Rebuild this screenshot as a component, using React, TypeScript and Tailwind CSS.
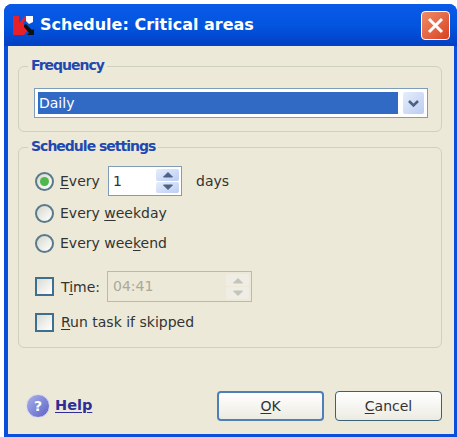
import React from 'react';

const font = { fontFamily: '"DejaVu Sans", sans-serif' };

const Radio = ({ checked }: { checked?: boolean }) => (
  <span className="flex h-[19px] w-[19px] shrink-0 items-center justify-center rounded-full border-2 border-[#5a7a88] bg-gradient-to-br from-[#d8d8d0] to-white">
    {checked && <span className="h-[9px] w-[9px] rounded-full bg-[#4fb84a]" />}
  </span>
);

const Checkbox = () => (
  <span className="h-[19px] w-[19px] shrink-0 border-2 border-[#3e6f8e] bg-gradient-to-br from-[#dcdcd4] to-white" />
);

const SpinButtons = ({ disabled }: { disabled?: boolean }) => {
  const color = disabled ? '#c4c4bc' : '#4d6185';
  const bg = disabled
    ? 'bg-[#f0eee4]'
    : 'bg-gradient-to-br from-[#e6eefc] to-[#bccdf1]';
  return (
    <div className="flex w-[23px] flex-col gap-px">
      {[true, false].map((up) => (
        <div key={String(up)} className={`flex flex-1 items-center justify-center rounded-[2px] ${bg}`}>
          <svg width="12" height="7" viewBox="0 0 12 7">
            <path d={up ? 'M1.5 6 6 1.5 10.5 6z' : 'M1.5 1 6 5.5 10.5 1z'} fill={color} stroke={color} />
          </svg>
        </div>
      ))}
    </div>
  );
};

const Group = ({ title, className, children }: { title: string; className: string; children: React.ReactNode }) => (
  <div className={`relative rounded-[6px] border border-[#d0d0bf] ${className}`}>
    <span className="absolute left-[9px] top-[-11px] bg-[#ece9d8] px-[3px] text-[14px] font-bold leading-[18px] tracking-[-1px] text-[#1f48b0]">
      {title}
    </span>
    {children}
  </div>
);

const Label = ({ pre, u, post }: { pre?: string; u: string; post?: string }) => (
  <span className="text-[14px] leading-[19px] text-[#333]">
    {pre}
    <span className="underline underline-offset-2">{u}</span>
    {post}
  </span>
);

export default function App() {
  return (
    <div className="h-[437px] w-[457px] bg-white pl-[4px] pt-[4px]" style={font}>
      <div className="flex h-full flex-col rounded-t-[8px] bg-[#0a4fdc] pl-[4px] pr-[3px] pb-[3px]">
        {/* title bar */}
        <div className="-ml-[4px] -mr-[3px] flex h-[42px] shrink-0 items-center rounded-t-[8px] bg-gradient-to-b from-[#0a5ae8] via-[#0355e0] to-[#0240c4] pl-[9px] pr-[7px]">
          <svg width="21" height="21" viewBox="0 0 21 21" className="shrink-0">
            <path d="M0 1h6v7l6-7h4l-6 7 5 7-4 5H6l0-7v7H0z" fill="#e8202a" />
            <path d="M13 1h7v6l-4 2-3-3z" fill="#fff" />
            <path d="M11 10l2-1 6 6 2-1v6h-7l2-2-5-6z" fill="#111" />
          </svg>
          <span className="ml-[6px] flex-1 text-[16px] font-bold text-white">Schedule: Critical areas</span>
          <div className="flex h-[29px] w-[29px] items-center justify-center rounded-[4px] border border-white bg-gradient-to-br from-[#ef8a66] to-[#d8401c]">
            <svg width="17" height="17" viewBox="0 0 17 17">
              <path d="M2 2l13 13M15 2 2 15" stroke="#fff" strokeWidth="3" />
            </svg>
          </div>
        </div>

        {/* client area */}
        <div className="flex flex-1 flex-col bg-[#ece9d8] pl-[10px] pr-[12px] text-[#333]">
          <Group title="Frequency" className="mt-[20px] h-[66px] shrink-0 pl-[15px] pr-[13px] pt-[21px]">
            <div className="flex h-[30px] items-center border border-[#7f9db9] bg-white p-[3px]">
              <div className="flex h-full flex-1 items-center bg-[#316ac5] pl-[1px] text-[14px] text-white">Daily</div>
              <div className="ml-[5px] flex h-full w-[21px] items-center justify-center rounded-[2px] bg-gradient-to-br from-[#e6eefc] to-[#bccdf1]">
                <svg width="13" height="9" viewBox="0 0 13 9">
                  <path d="M2 2l4.5 4.5L11 2" fill="none" stroke="#4d6185" strokeWidth="2.6" />
                </svg>
              </div>
            </div>
          </Group>

          <Group title="Schedule settings" className="mt-[15px] h-[201px] shrink-0 pl-[16px] pt-[18px]">
            <div className="flex items-center">
              <Radio checked />
              <span className="ml-[6px] w-[48px]">
                <Label u="E" post="very" />
              </span>
              <div className="flex h-[30px] w-[74px] border border-[#7f9db9] bg-white p-[2px]">
                <span className="flex-1 pl-[2px] text-[14px] leading-[24px]">1</span>
                <SpinButtons />
              </div>
              <span className="ml-[14px] text-[14px]">days</span>
            </div>
            <div className="mt-[8px] flex items-center gap-[6px]">
              <Radio />
              <Label pre="Every " u="w" post="eekday" />
            </div>
            <div className="mt-[11px] flex items-center gap-[6px]">
              <Radio />
              <Label pre="Every wee" u="k" post="end" />
            </div>
            <div className="mt-[18px] flex items-center">
              <Checkbox />
              <span className="ml-[7px] w-[46px]">
                <Label pre="T" u="i" post="me:" />
              </span>
              <div className="flex h-[31px] w-[145px] border border-[#a9bccb] bg-[#ece9d8] p-[2px]">
                <span className="flex-1 pl-[3px] text-[14px] leading-[25px] text-[#aca899]">04:41</span>
                <SpinButtons disabled />
              </div>
            </div>
            <div className="mt-[11px] flex items-center gap-[7px]">
              <Checkbox />
              <Label u="R" post="un task if skipped" />
            </div>
          </Group>

          {/* footer */}
          <div className="mt-[43px] flex items-center">
            <div className="ml-[8px] flex h-[24px] w-[24px] items-center justify-center rounded-full border border-[#dcdcf0] bg-gradient-to-br from-[#aab0ea] to-[#5f62c4] text-[14px] font-bold text-white">
              ?
            </div>
            <span className="ml-[5px] flex-1 text-[14.5px] font-bold text-[#2e2e96] underline underline-offset-2">Help</span>
            <button className="h-[30px] w-[107px] rounded-[4px] border-2 border-[#4f7fb8] bg-gradient-to-b from-white to-[#ecebe2] text-[14px] text-[#333]">
              <span className="underline underline-offset-2">O</span>K
            </button>
            <button className="ml-[11px] h-[30px] w-[107px] rounded-[4px] border border-[#3b6178] bg-gradient-to-b from-white to-[#ecebe2] text-[14px] text-[#333]">
              <span className="underline underline-offset-2">C</span>ancel
            </button>
          </div>
        </div>
      </div>
    </div>
  );
}
